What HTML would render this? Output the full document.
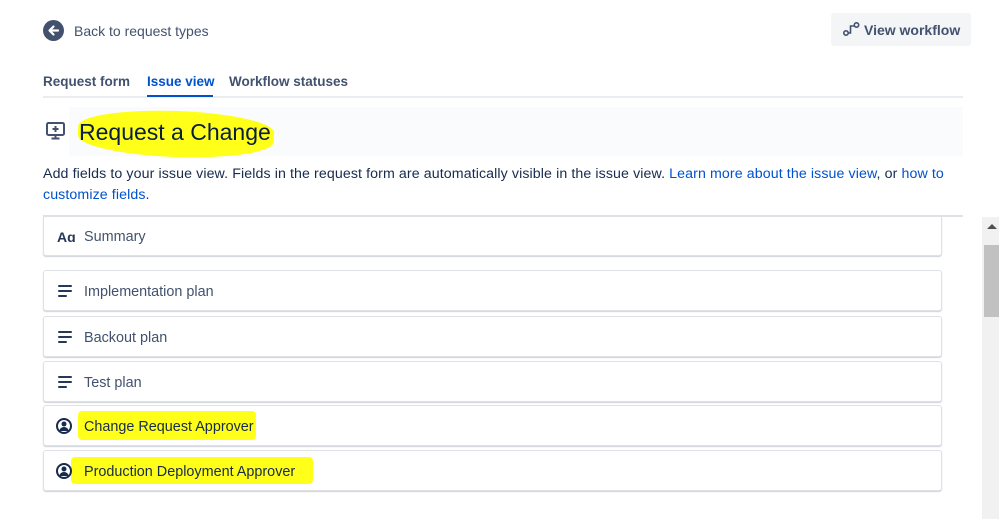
<!DOCTYPE html>
<html><head><meta charset="utf-8"><style>
*{margin:0;padding:0;box-sizing:border-box}
body{width:999px;height:519px;overflow:hidden;background:#fff;font-family:"Liberation Sans",sans-serif;color:#172b4d;position:relative}
.a{position:absolute}
.card{position:absolute;left:43px;width:899px;height:41px;border:1px solid #dfe1e6;border-radius:3px;box-shadow:0 1px 1px rgba(9,30,66,.2);background:#fff}
.card span{position:absolute;left:40px;top:13px;font-size:14.4px;color:#42526e;white-space:nowrap}
.lines{position:absolute;left:14px;top:14px;width:14px}
.lines i{display:block;height:2px;background:#253858;margin-bottom:3px;border-radius:1px}
.hl{position:absolute;background:#ffff1a;border-radius:50%/40%}
a{color:#0052cc;text-decoration:none}
</style></head><body>
<svg class="a" style="left:43px;top:20px" width="21" height="21" viewBox="0 0 21 21"><circle cx="10.5" cy="10.5" r="10.5" fill="#42526e"/><path d="M15 10.5H7M10.5 6.5L6.5 10.5l4 4" stroke="#fff" stroke-width="2.2" fill="none" stroke-linecap="round" stroke-linejoin="round"/></svg>
<div class="a" style="left:74px;top:23px;font-size:14px;color:#42526e">Back to request types</div>
<div class="a" style="left:831px;top:13px;width:140px;height:33px;background:#f4f5f7;border-radius:3px"></div>
<svg class="a" style="left:843px;top:22px" width="18" height="14" viewBox="0 0 18 14"><circle cx="3" cy="11" r="2.2" fill="none" stroke="#42526e" stroke-width="1.6"/><circle cx="13.5" cy="3" r="2.2" fill="none" stroke="#42526e" stroke-width="1.6"/><path d="M5 11h2.5V4h3.8" stroke="#42526e" stroke-width="1.6" fill="none"/></svg>
<div class="a" style="left:864px;top:22px;font-size:14px;color:#42526e;font-weight:bold">View workflow</div>
<div class="a" style="left:43px;top:74px;font-size:13.5px;color:#42526e;font-weight:bold">Request form</div>
<div class="a" style="left:147px;top:74px;font-size:13.5px;color:#0052cc;font-weight:bold">Issue view</div>
<div class="a" style="left:229px;top:74px;font-size:13.5px;color:#42526e;font-weight:bold">Workflow statuses</div>
<div class="a" style="left:43px;top:96px;width:920px;height:2px;background:#ebecf0"></div>
<div class="a" style="left:147px;top:95px;width:66px;height:2px;background:#0052cc"></div>
<div class="a" style="left:69px;top:107px;width:894px;height:49px;background:#fafbfc"></div>
<svg class="a" style="left:46px;top:122px" width="19" height="18" viewBox="0 0 19 18"><rect x="1" y="1" width="17" height="12" rx="1.5" fill="none" stroke="#42526e" stroke-width="2"/><path d="M9.5 4v6M6.5 7h6M9.5 13v3M5.5 16.5h8" stroke="#42526e" stroke-width="2"/></svg>
<div class="hl" style="left:78px;top:111px;width:196px;height:46px;transform:rotate(2deg)"></div>
<div class="a" style="left:79px;top:119px;font-size:23px;color:#091e42">Request a Change</div>
<div class="a" style="left:43px;top:164px;width:920px;font-size:14.2px;letter-spacing:0.1px;line-height:21px;color:#172b4d">Add fields to your issue view. Fields in the request form are automatically visible in the issue view. <a>Learn more about the issue view</a>, or <a>how to</a><br><a>customize fields</a>.</div>
<div class="card" style="top:215px"><b style="position:absolute;left:13px;top:13px;font-size:14px;color:#253858">Aɑ</b><span>Summary</span></div>
<div class="a" style="left:43px;top:215px;width:920px;height:2px;background:#dfe1e6"></div>
<div class="card" style="top:270px"><div class="lines"><i style="width:14px"></i><i style="width:14px"></i><i style="width:9px"></i></div><span>Implementation plan</span></div>
<div class="card" style="top:316px"><div class="lines"><i style="width:14px"></i><i style="width:14px"></i><i style="width:9px"></i></div><span>Backout plan</span></div>
<div class="card" style="top:361px"><div class="lines"><i style="width:14px"></i><i style="width:14px"></i><i style="width:9px"></i></div><span>Test plan</span></div>
<div class="card" style="top:405px"><div class="hl" style="left:34px;top:5px;width:178px;height:29px;border-radius:4px"></div><svg style="position:absolute;left:12px;top:12px" width="16" height="16" viewBox="0 0 16 16"><circle cx="8" cy="8" r="7" fill="none" stroke="#172b4d" stroke-width="2"/><circle cx="8" cy="6" r="2.5" fill="#172b4d"/><path d="M3.5 13a4.5 4 0 0 1 9 0z" fill="#172b4d"/></svg><span style="color:#172b4d">Change Request Approver</span></div>
<div class="card" style="top:450px"><div class="hl" style="left:27px;top:6px;width:242px;height:27px;border-radius:4px"></div><svg style="position:absolute;left:12px;top:12px" width="16" height="16" viewBox="0 0 16 16"><circle cx="8" cy="8" r="7" fill="none" stroke="#172b4d" stroke-width="2"/><circle cx="8" cy="6" r="2.5" fill="#172b4d"/><path d="M3.5 13a4.5 4 0 0 1 9 0z" fill="#172b4d"/></svg><span style="color:#172b4d">Production Deployment Approver</span></div>
<div class="a" style="left:982px;top:217px;width:17px;height:302px;background:#f1f1f1"></div>
<div class="a" style="left:984px;top:245px;width:15px;height:72px;background:#c1c1c1"></div>
<div class="a" style="left:987px;top:224px;width:0;height:0;border-left:5px solid transparent;border-right:5px solid transparent;border-bottom:5px solid #505050"></div>
</body></html>
